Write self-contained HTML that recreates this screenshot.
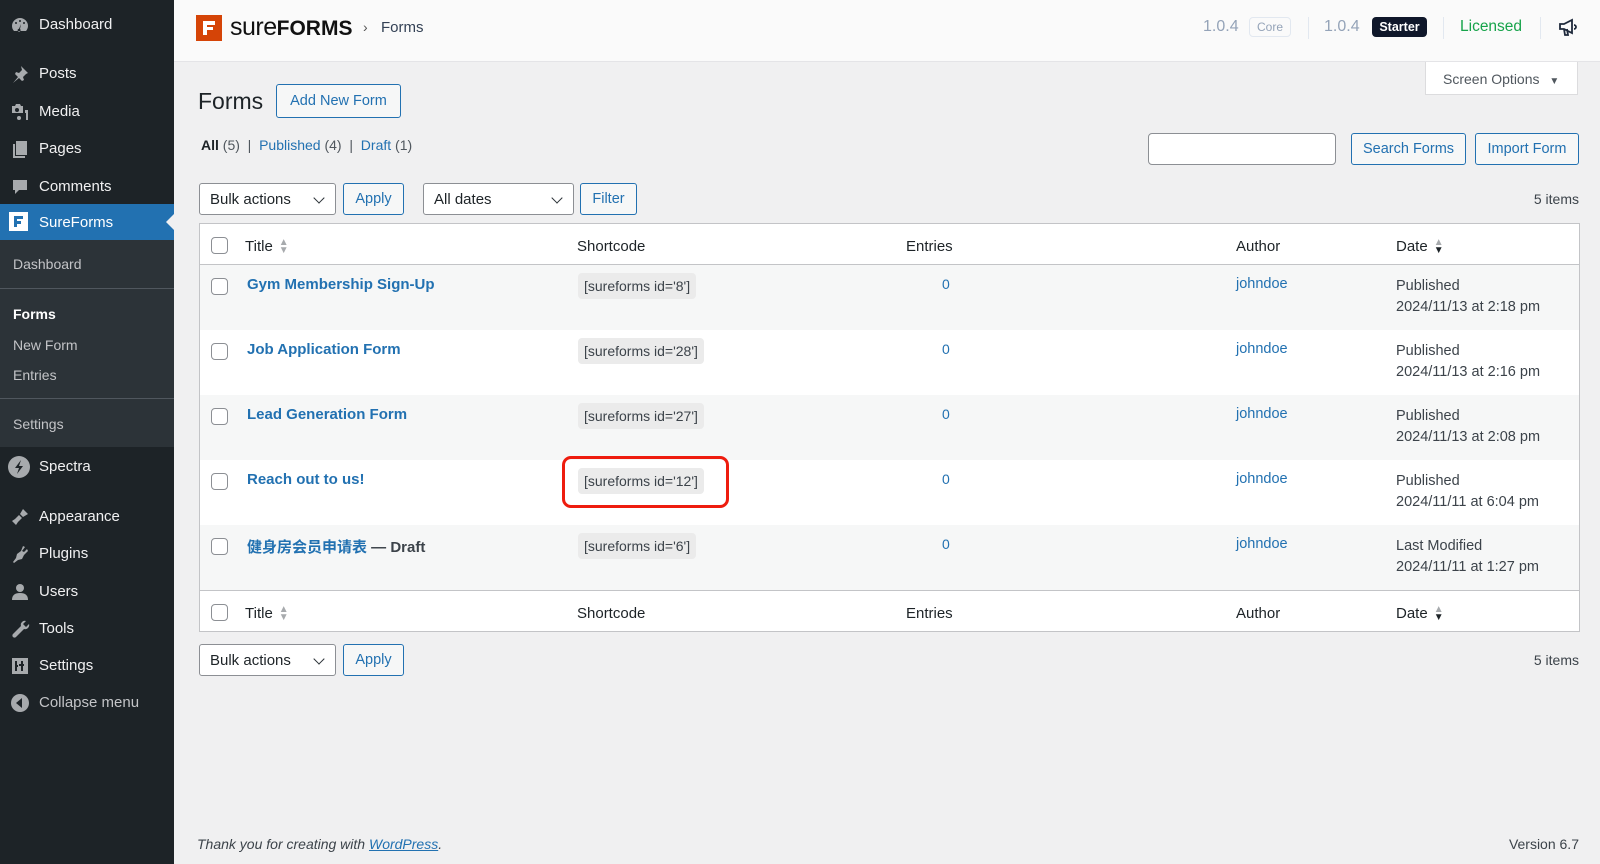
<!DOCTYPE html>
<html><head><meta charset="utf-8"><style>
*{box-sizing:border-box;margin:0;padding:0}
body{width:1600px;height:864px;background:#f0f0f1;font-family:"Liberation Sans","Noto Sans CJK SC",sans-serif;color:#1d2327;position:relative;overflow:hidden;font-size:14px}
.a{position:absolute;white-space:nowrap}
#side{position:absolute;left:0;top:0;width:174px;height:864px;background:#1d2327}
.mi{position:absolute;left:39px;color:#f0f0f1;font-size:15px;margin-top:2px}
.ic{position:absolute;left:10px;width:20px;height:20px;fill:#a7aaad;margin-top:1px}
.si{position:absolute;left:13px;color:#c3c4c7;font-size:14px;margin-top:1px}
.blue{color:#2271b1}
.btn{position:absolute;border:1px solid #2271b1;border-radius:3px;color:#2271b1;background:#f6f7f7;font-size:14.5px;display:flex;align-items:center;justify-content:center}
.sel{position:absolute;border:1px solid #8c8f94;border-radius:3px;background:#fff;font-size:15px;padding-left:10px;display:flex;align-items:center}
.sel:after{content:"";position:absolute;right:12px;top:10px;width:7px;height:7px;border-right:1.5px solid #2c3338;border-bottom:1.5px solid #2c3338;transform:rotate(45deg)}
.cb{position:absolute;left:211px;width:17px;height:17px;border:1px solid #8c8f94;border-radius:4px;background:#fff}
.row{position:absolute;left:200px;width:1379px;height:65px}
.tt{position:absolute;left:47px;top:11px;font-weight:bold;color:#2271b1;font-size:15px}
.sc{position:absolute;left:378px;top:8px;background:#ebebeb;color:#3c434a;font-size:14px;padding:5px 6px;border-radius:4px}
.en{position:absolute;left:742px;top:11px;color:#2271b1;font-size:14px}
.au{position:absolute;left:1036px;top:11px;color:#2271b1;font-size:14.5px}
.dt{position:absolute;left:1196px;top:11px;color:#3c434a;font-size:14.5px;line-height:21px}
.th{position:absolute;font-size:15px;color:#1d2327;margin-top:3px}
.sort{display:inline-block;margin-left:6px;vertical-align:middle;font-size:10px;line-height:8px;color:#a7aaad}
</style></head><body>
<div id="side">
<svg class="ic" style="top:14px" viewBox="0 0 20 20"><path d="M10 3a8 8 0 0 0-8 8c0 2 .7 3.6 2 5h12a8 8 0 0 0 2-5 8 8 0 0 0-8-8zm0 2a1 1 0 1 1 0 2 1 1 0 0 1 0-2zm-4 2a1 1 0 1 1 0 2 1 1 0 0 1 0-2zm8 0a1 1 0 1 1 0 2 1 1 0 0 1 0-2zm-3 2l-1 5a1.5 1.5 0 1 1-1-.3z"/></svg>
<div class="mi" style="top:14px">Dashboard</div>
<svg class="ic" style="top:63px" viewBox="0 0 20 20"><path d="M11 2l7 7-2 1-3 3 1 3-2 1-3-3-6 5 5-6-3-3 1-2 3 1 3-3z"/></svg>
<div class="mi" style="top:63px">Posts</div>
<svg class="ic" style="top:101px" viewBox="0 0 20 20"><path d="M2 4h3l1-2h4l1 2h2v7H2zm5 2a2 2 0 1 0 0 4 2 2 0 0 0 0-4zm8 2h3v10h-2v-7h-1zm-6 6a2 2 0 1 1 0 4 2 2 0 0 1 0-4z"/></svg>
<div class="mi" style="top:101px">Media</div>
<svg class="ic" style="top:138px" viewBox="0 0 20 20"><path d="M6 2h11v14H6zM3 5h2v12h10v2H3z"/></svg>
<div class="mi" style="top:138px">Pages</div>
<svg class="ic" style="top:176px" viewBox="0 0 20 20"><path d="M3 3h14v10H9l-4 4v-4H3z"/></svg>
<div class="mi" style="top:176px">Comments</div>
<div class="a" style="left:0;top:204px;width:174px;height:36px;background:#2271b1"></div>
<div class="a" style="left:166px;top:214px;width:0;height:0;border-top:8px solid transparent;border-bottom:8px solid transparent;border-right:8px solid #f0f0f1"></div>
<div class="a" style="left:9px;top:212px;width:19px;height:19px;background:#fff"><div style="position:absolute;left:5px;top:4px;width:9px;height:3px;background:#2271b1"></div><div style="position:absolute;left:5px;top:9px;width:7px;height:3px;background:#2271b1"></div><div style="position:absolute;left:5px;top:4px;width:3px;height:11px;background:#2271b1"></div></div>
<div class="mi" style="top:212px;color:#fff">SureForms</div>
<div class="a" style="left:0;top:240px;width:174px;height:207px;background:#2c3338"></div>
<div class="si" style="top:255px">Dashboard</div>
<div class="a" style="left:0;top:288px;width:174px;height:1px;background:#50575e"></div>
<div class="si" style="top:305px;color:#fff;font-weight:bold">Forms</div>
<div class="si" style="top:336px">New Form</div>
<div class="si" style="top:366px">Entries</div>
<div class="a" style="left:0;top:398px;width:174px;height:1px;background:#50575e"></div>
<div class="si" style="top:415px">Settings</div>
<svg class="ic" style="top:455px;left:8px;width:22px;height:22px" viewBox="0 0 22 22"><circle cx="11" cy="11" r="11" fill="#a7aaad"/><path d="M13 4l-6 8h4l-2 6 6-8h-4z" fill="#1d2327"/></svg>
<div class="mi" style="top:456px">Spectra</div>
<svg class="ic" style="top:506px" viewBox="0 0 20 20"><path d="M13 2l5 5-5 3-3-3zM9 8l3 3-4 4-2 3-4-4 3-2z"/></svg>
<div class="mi" style="top:506px">Appearance</div>
<svg class="ic" style="top:543px" viewBox="0 0 20 20"><path d="M13 2l2 1-3 4 2 1 3-3 1 2-4 4-2 4-4 1-4 3-1-1 3-4 1-4 4-3z"/></svg>
<div class="mi" style="top:543px">Plugins</div>
<svg class="ic" style="top:581px" viewBox="0 0 20 20"><circle cx="10" cy="6" r="4"/><path d="M2 18c0-5 3-7 8-7s8 2 8 7z"/></svg>
<div class="mi" style="top:581px">Users</div>
<svg class="ic" style="top:618px" viewBox="0 0 20 20"><path d="M16 2a4 4 0 0 0-5 5L3 15a2 2 0 0 0 3 3l8-8a4 4 0 0 0 5-5l-3 3-3-3z"/></svg>
<div class="mi" style="top:618px">Tools</div>
<svg class="ic" style="top:655px" viewBox="0 0 20 20"><path d="M2 2h16v16H2zm3 3v10h2v-4h1V9H7V5zm6 0v3H9v2h2v5h2v-5h1V8h-1V5z"/></svg>
<div class="mi" style="top:655px">Settings</div>
<svg class="ic" style="top:692px" viewBox="0 0 20 20"><circle cx="10" cy="10" r="9"/><path d="M12 5v10l-6-5z" fill="#1d2327"/></svg>
<div class="mi" style="top:692px;color:#c3c4c7">Collapse menu</div>
</div>

<div class="a" style="left:174px;top:0;width:1426px;height:62px;background:#fafafa;border-bottom:1px solid #e4e4e7"></div>
<div class="a" style="left:196px;top:15px;width:26px;height:26px;background:#d54407"><div style="position:absolute;left:7px;top:6px;width:12px;height:4px;background:#fff"></div><div style="position:absolute;left:7px;top:12px;width:10px;height:3px;background:#fff"></div><div style="position:absolute;left:7px;top:6px;width:4px;height:14px;background:#fff"></div></div>
<div class="a" style="left:230px;top:13px;font-size:25px;color:#111;letter-spacing:-0.5px">sure<b style="font-size:21px;letter-spacing:0">FORMS</b></div>
<div class="a" style="left:363px;top:19px;font-size:14px;color:#555">›</div>
<div class="a" style="left:381px;top:19px;font-size:15px;color:#334155">Forms</div>
<div class="a" style="left:1203px;top:18px;font-size:16px;color:#94a3b8">1.0.4</div>
<div class="a" style="left:1249px;top:17px;width:42px;height:20px;border:1px solid #e2e8f0;border-radius:4px;font-size:12px;color:#94a3b8;text-align:center;line-height:18px">Core</div>
<div class="a" style="left:1308px;top:17px;width:1px;height:22px;background:#e2e8f0"></div>
<div class="a" style="left:1324px;top:18px;font-size:16px;color:#94a3b8">1.0.4</div>
<div class="a" style="left:1372px;top:17px;width:55px;height:20px;background:#0f172a;border-radius:4px;font-size:12.5px;color:#fff;text-align:center;line-height:20px;font-weight:bold">Starter</div>
<div class="a" style="left:1443px;top:17px;width:1px;height:22px;background:#e2e8f0"></div>
<div class="a" style="left:1460px;top:18px;font-size:15.5px;color:#16a34a">Licensed</div>
<div class="a" style="left:1540px;top:17px;width:1px;height:22px;background:#e2e8f0"></div>
<svg class="a" style="left:1558px;top:17px" width="20" height="20" viewBox="0 0 20 20" fill="none" stroke="#1e293b" stroke-width="1.8"><path d="M2 7h4l8-4v13l-8-4H2zM6 12l1 6h3l-1-6M16 8a2 2 0 0 1 0 4"/></svg>

<div class="a" style="left:1425px;top:62px;width:153px;height:33px;background:#fff;border:1px solid #dcdcde;border-top:none;font-size:14px;color:#50575e;padding:9px 0 0 17px">Screen Options <span style="font-size:10px;margin-left:6px">▼</span></div>

<div class="a" style="left:198px;top:88px;font-size:23px;color:#1d2327">Forms</div>
<div class="btn" style="left:276px;top:84px;width:125px;height:34px">Add New Form</div>
<div class="a" style="left:201px;top:137px;font-size:14px;color:#50575e"><b style="color:#1d2327">All</b> (5) &nbsp;| &nbsp;<span class="blue">Published</span> (4) &nbsp;| &nbsp;<span class="blue">Draft</span> (1)</div>
<div class="a" style="left:1148px;top:133px;width:188px;height:32px;background:#fff;border:1px solid #8c8f94;border-radius:4px"></div>
<div class="btn" style="left:1351px;top:133px;width:115px;height:32px">Search Forms</div>
<div class="btn" style="left:1475px;top:133px;width:104px;height:32px">Import Form</div>

<div class="sel" style="left:199px;top:183px;width:137px;height:32px">Bulk actions</div>
<div class="btn" style="left:343px;top:183px;width:61px;height:32px">Apply</div>
<div class="sel" style="left:423px;top:183px;width:151px;height:32px">All dates</div>
<div class="btn" style="left:580px;top:183px;width:57px;height:32px">Filter</div>
<div class="a" style="right:21px;top:191px;font-size:14px;color:#3c434a">5 items</div>

<div class="a" style="left:199px;top:223px;width:1381px;height:409px;background:#fff;border:1px solid #c3c4c7"></div>
<div class="a" style="left:200px;top:264px;width:1379px;height:1px;background:#c3c4c7"></div>
<div class="a" style="left:200px;top:590px;width:1379px;height:1px;background:#c3c4c7"></div>
<div class="cb" style="top:237px"></div>
<div class="th blue" style="left:245px;top:235px">Title<span class="sort">▲<br>▼</span></div>
<div class="th" style="left:577px;top:235px">Shortcode</div>
<div class="th" style="left:906px;top:235px">Entries</div>
<div class="th" style="left:1236px;top:235px">Author</div>
<div class="th blue" style="left:1396px;top:235px">Date<span class="sort" style="color:#1d2327"><span style="color:#a7aaad">▲</span><br>▼</span></div>

<div class="row" style="top:265px;background:#f6f7f7"><div class="cb" style="left:11px;top:13px"></div><div class="tt">Gym Membership Sign-Up</div><div class="sc">[sureforms id='8']</div><div class="en">0</div><div class="au">johndoe</div><div class="dt">Published<br>2024/11/13 at 2:18 pm</div></div>
<div class="row" style="top:330px"><div class="cb" style="left:11px;top:13px"></div><div class="tt">Job Application Form</div><div class="sc">[sureforms id='28']</div><div class="en">0</div><div class="au">johndoe</div><div class="dt">Published<br>2024/11/13 at 2:16 pm</div></div>
<div class="row" style="top:395px;background:#f6f7f7"><div class="cb" style="left:11px;top:13px"></div><div class="tt">Lead Generation Form</div><div class="sc">[sureforms id='27']</div><div class="en">0</div><div class="au">johndoe</div><div class="dt">Published<br>2024/11/13 at 2:08 pm</div></div>
<div class="row" style="top:460px"><div class="cb" style="left:11px;top:13px"></div><div class="tt">Reach out to us!</div><div class="sc">[sureforms id='12']</div><div class="en">0</div><div class="au">johndoe</div><div class="dt">Published<br>2024/11/11 at 6:04 pm</div></div>
<div class="row" style="top:525px;height:65px;background:#f6f7f7"><div class="cb" style="left:11px;top:13px"></div><div class="tt">健身房会员申请表 <span style="color:#3c434a">— Draft</span></div><div class="sc">[sureforms id='6']</div><div class="en">0</div><div class="au">johndoe</div><div class="dt">Last Modified<br>2024/11/11 at 1:27 pm</div></div>

<div class="a" style="left:562px;top:456px;width:167px;height:52px;border:3px solid #ee1c0e;border-radius:9px"></div>

<div class="cb" style="top:604px"></div>
<div class="th blue" style="left:245px;top:602px">Title<span class="sort">▲<br>▼</span></div>
<div class="th" style="left:577px;top:602px">Shortcode</div>
<div class="th" style="left:906px;top:602px">Entries</div>
<div class="th" style="left:1236px;top:602px">Author</div>
<div class="th blue" style="left:1396px;top:602px">Date<span class="sort" style="color:#1d2327"><span style="color:#a7aaad">▲</span><br>▼</span></div>

<div class="sel" style="left:199px;top:644px;width:137px;height:32px">Bulk actions</div>
<div class="btn" style="left:343px;top:644px;width:61px;height:32px">Apply</div>
<div class="a" style="right:21px;top:652px;font-size:14px;color:#3c434a">5 items</div>

<div class="a" style="left:197px;top:836px;font-size:14px;color:#3c434a;font-style:italic">Thank you for creating with <span class="blue" style="text-decoration:underline">WordPress</span>.</div>
<div class="a" style="right:21px;top:836px;font-size:14px;color:#3c434a">Version 6.7</div>
</body></html>
